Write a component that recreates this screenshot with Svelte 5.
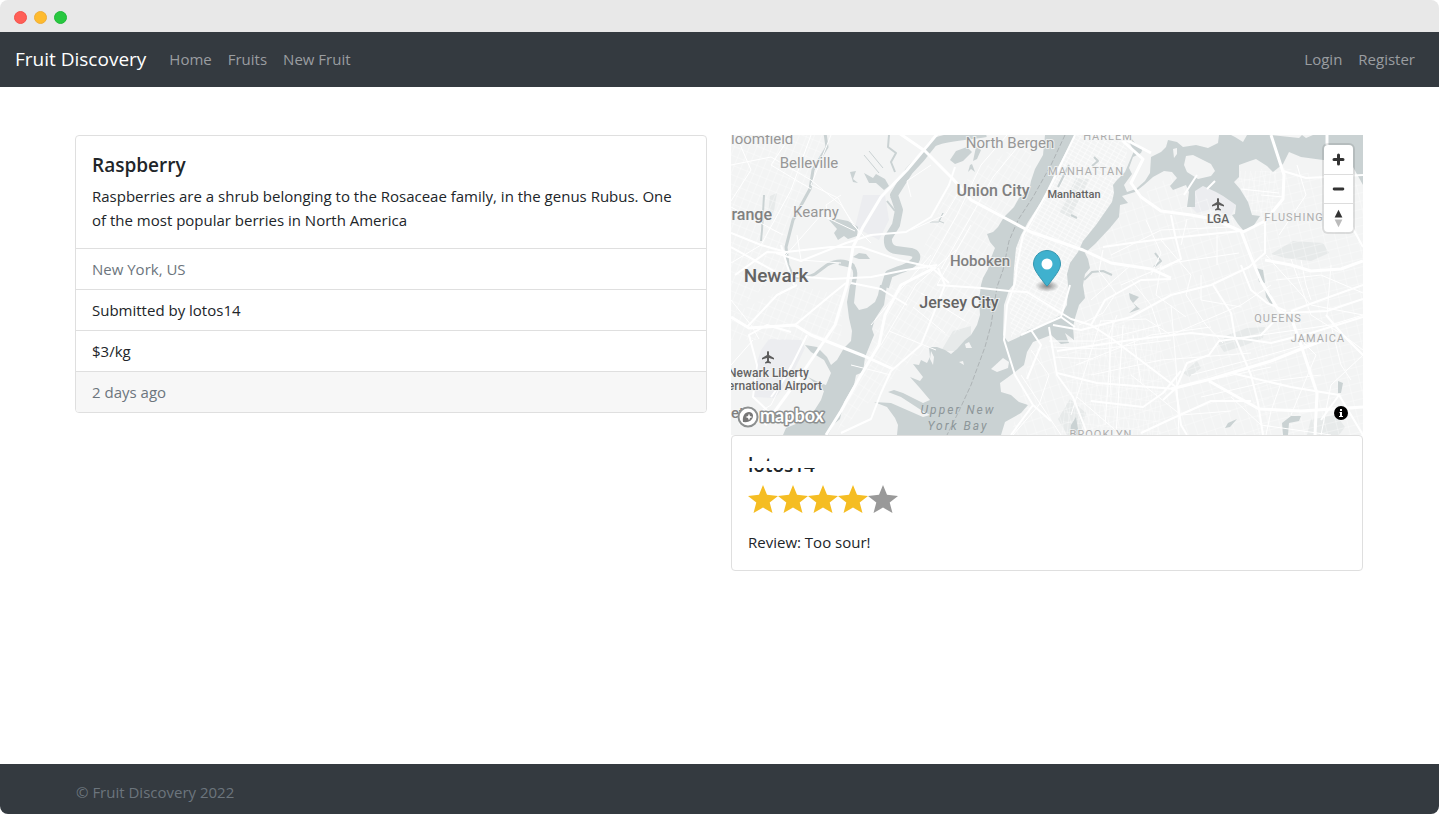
<script>
  const navLinks = ['Home', 'Fruits', 'New Fruit'];
  const userLinks = ['Login', 'Register'];
  const details = [
    { text: 'New York, US', muted: true },
    { text: 'Submitted by lotos14' },
    { text: '$3/kg' }
  ];
  const rating = 4;

  const water = [
    // Hudson
    'M314 0L312 20L304 34L300 46L298 56L288 63L283 72L273 82L267 92L262 97L256 99L259 107L264 113L260 123L257 134L252 143L250 150L248 165L249 180L246 190L240 200L234 205L226 214L220 219L214 215L206 212L198 212L199 222L196 228L190 225L188 230L182 229L192 242L189 246L179 242L188 252L199 265L192 268L172 258L163 255L157 257L170 262L190 275L199 280L192 282L160 268L143 267L156 272L164 283L167 290L166 300L270 300L274 287L283 282L290 278L297 270L288 267L280 260L270 257L269 248L276 243L284 237L293 230L296 217L302 207L320 200L330 209L338 208L334 198L343 205L342 192L344 183L348 170L354 163L352 150L354 139L359 133L357 124L354 118L364 109L379 93L388 82L389 70L397 68L391 61L404 57L413 50L422 42L433 36L441 37L446 43L439 51L442 55L455 50L458 57L456 72L464 72L464 56L472 51L485 57L492 61L505 70L504 79L501 80L507 89L512 95L521 93L529 81L521 80L517 67L509 54L503 47L508 42L508 30L519 26L525 24L536 31L542 37L552 29L558 17L570 22L592 25L606 25L622 32L632 50V0H582L575 3L571 0L568 3L540 0H516L512 7L504 2L500 0H488L487 8L477 13L465 10L452 12L446 7L437 5L435 12L430 17L420 22L419 38L414 46L405 54L396 57L393 50L401 39L398 33L402 22L410 18L412 13L404 8L400 3L397 5L403 16L394 37L386 45L382 50L383 58L381 67L365 90L352 106L347 117L339 128L336 139L337 150L336 170L330 180L312 190L297 195L288 202L277 207L272 200L273 170L278 155L282 150L283 133L285 113L290 100L297 87L310 67L320 47L327 32L336 15L344 0Z',
    // Newark Bay
    'M119 150L116 167L118 183L121 196L120 206L113 213L106 225L100 230L96 222L86 212L74 210L80 217L93 225L100 238L95 250L89 248L77 242L86 250L93 256L90 265L83 276L72 286L55 293L52 300H97L103 289L109 284L113 267L123 250L125 240L132 237L134 222L143 200L141 194L144 184L153 170L156 150H149L147 160L144 167L136 173L128 175L123 168L125 150Z',
    // ponds and creeks
    'M98 85L107 84L117 86L127 92L126 101L117 104L113 101L107 105L103 98L106 94Z',
    'M133 38L142 43L145 39L154 44L158 51L153 55L145 48L138 48Z',
    'M219 25L225 16L236 12L241 17L232 26L224 29Z M241 29L244 37L240 34L237 37L239 30Z',
    'M119 37L125 36L122 44L127 48L122 47Z',
    'M128 118L135 119L139 124L128 124L122 122Z M245 12L250 15L246 24L242 26Z',
    'M534 153L539 158L543 167L540 170L535 162Z M525 133L532 135L534 148L528 147Z M398 158L408 162L402 168L409 174L398 178L405 172L399 164Z',
    'M552 300L551 288L560 281L570 281L568 286L558 288L557 300Z M607 246L612 248L610 258L607 258Z M497 288L506 284L499 292L494 293Z M339 300L340 290L345 282L348 300Z'
  ];
  const islands = [
    'M455 21L462 20L470 24L480 29L484 36L480 41L467 44L456 37L453 30Z',
    'M442 14L446 13L446 19L443 23Z',
    'M260 234L272 223L278 227L277 233L266 237Z',
    'M234 209L238 207L241 213L235 213Z M228 227L232 226L233 230Z M200 216L203 222L202 230L199 224Z'
  ];
  const streams = [
    { d: 'M255 -2C232 2 212 2 202 8L190 23L178 36L171 47L163 60L168 75L165 90L157 103Q156 114 165 115L180 117Q188 119 184 126Q178 132 168 135L158 139L154 152', w: 8 },
    { d: 'M120 152Q127 140 122 130Q110 122 96 130L84 139Q72 145 62 141L57 130L55 112L62 85L79 54L82 35L96 12L94 -2', w: 3 },
    { d: 'M122 150Q127 136 121 131L108 128', w: 4 },
    { d: 'M33 60L31 95L30 106', w: 2 },
    { d: 'M158 0L157 12L165 18L160 27L164 37', w: 2 },
    { d: 'M353 145L361 137L372 136L381 140M424 118L430 126L423 132', w: 2 },
    { d: 'M133 20L148 38M138 16L152 33M199 87L208 87L212 78L208 86L213 88', w: 1 },
    { d: 'M156 66L164 76M160 62L166 70', w: 2 }
  ];
  const parks = [
    'M487 208L497 200L516 193L534 192L532 203L512 211L493 217Z',
    'M39 61L46 58L43 76L36 87L38 70Z',
    'M328 77L345 43L358 44L340 83Z',
    'M540 119L562 106L592 108L598 118L580 126L554 123Z',
    'M327 284L339 264L355 278L349 300H336Z',
    'M452 238L466 226L470 233L458 242Z',
    'M210 216L222 196L240 191L240 200L224 216Z',
    'M576 300L580 284L605 280L614 292L608 300Z'
  ];
  const airports = [
    'M30 215L38 204L70 205L74 213L58 246L44 263L22 262L22 240Z',
    'M460 72L464 55L475 50L505 70L500 81L480 74L466 78Z',
    'M132 60L154 60L158 85L148 105L124 92Z'
  ];
  const grids = [
    { id: 'g1', fill: 'M0 0H96L82 45L55 90L57 132L30 155L0 180Z' },
    { id: 'g2', fill: 'M178 150L214 60L300 0L300 56L262 97L252 145L246 185L180 225L105 300L133 225L160 150Z' },
    { id: 'g3', fill: 'M344 0H398L393 38L382 66L347 116L336 150L332 178L280 202L278 155L283 115L298 87Z' },
    { id: 'g4', fill: 'M355 120L390 75L440 40L500 80L530 90L540 300H280L300 215L343 200Z' },
    { id: 'g5', fill: 'M505 45L540 30L632 50V300H525L530 90Z' },
    { id: 'g6', fill: 'M345 190H430V300H330Z' },
    { id: 'g1', fill: 'M0 180L60 150L112 160L110 205L0 205Z' },
    { id: 'g6', fill: 'M505 36H545V78H520Z' }
  ];
  const minor = [
    'M0 30L40 22L80 45L110 70L130 100M5 0L20 35L0 66M60 0L40 30L80 54M0 72L52 100M80 0L60 55L30 110L0 128',
    'M55 120L90 80L124 96M100 0L80 50L107 63L122 90L140 108M66 100L70 125L110 128',
    'M196 134L226 80L250 30L276 0M210 134L238 85L262 42L290 8M180 95L214 80L226 60M206 150L240 90M200 30L176 46L180 62',
    'M140 190L165 160L200 120M150 210L185 150L225 115M158 196L205 215M182 172L214 198M190 158L234 186M120 230L160 240',
    'M380 120L430 95L500 92M390 150L440 128L508 118M400 145L420 170L430 200M440 200L510 170L540 150M360 165L400 130M372 115L368 136L385 158L372 178L348 190',
    'M430 105L460 140L455 160L475 190L492 208M450 110L456 84M470 140L470 165L510 172M486 130L486 100M415 85L430 118L420 140',
    'M535 120L580 170L632 180M548 100L575 60L566 30M560 124L580 180L612 200L632 215M545 145L590 140L632 158M570 125L575 150L580 165M600 130L596 180M530 60L552 62M510 54L548 58',
    'M345 230L420 200L480 192M360 240L430 225L520 218M400 240L450 280L500 276M440 170L445 230L448 300M380 260L378 200L386 180M410 248L402 200',
    'M460 240L530 222L580 208M455 250L540 232M470 262L540 246L590 240M530 200L600 190L632 180M500 262L530 290L600 300M550 248L540 276L535 300',
    'M560 280L585 220L570 205M590 300L600 250L632 220M600 190L610 230L620 245M440 200L415 184L370 186M430 130L425 160L455 182',
    'M300 215L318 240L308 270L282 300M290 240L330 300M346 262L390 300M0 230L22 205M110 60L95 70L98 84M8 290L40 270L60 230M0 165L20 190L28 204',
    'M318 206L365 206L430 190M320 212L370 214L440 205M322 222L362 224M370 185L340 280M382 185L374 290M392 190L385 300'
  ];
  const highways = [
    { d: 'M207 -2L176 35L150 62L132 92L122 112L116 150L104 190L70 240L34 290', w: 3 },
    { d: 'M165 -4L194 16L222 44L240 65L272 82L300 97L352 115L380 128L420 134L440 143', w: 3 },
    { d: 'M0 98L30 110L55 117L100 112L130 112L168 125L200 132L218 148', w: 2 },
    { d: 'M0 112L50 140L100 144L140 142L175 135L206 130', w: 2 },
    { d: 'M45 118L70 126L115 108L140 100L175 97L200 82L218 50L224 32', w: 2 },
    { d: 'M4 140L36 117L55 118M50 110L56 130L63 150', w: 2 },
    { d: 'M0 182L18 193L64 190L80 200L133 221L162 234', w: 3 },
    { d: 'M16 192L46 160L66 150M64 190L100 160L115 148', w: 2 },
    { d: 'M60 197L36 190L18 200L26 230L22 262L36 275M76 200L56 240L40 262', w: 2 },
    { d: 'M205 132L170 150L154 180L148 210L130 240L110 276L95 300', w: 3 },
    { d: 'M207 133L214 150L198 190L190 210L160 236L150 258L140 284L110 298', w: 2 },
    { d: 'M120 148L150 154L176 170', w: 2 },
    { d: 'M344 0L316 58L292 100L286 130L284 148L276 170L273 205L284 240L302 270L320 286', w: 2 },
    { d: 'M206 150L250 153L278 156L296 157L340 184L360 190L380 203L445 252', w: 2 },
    { d: 'M386 -2L394 8L412 24L400 48L410 62L430 76L460 80L482 84L512 97L534 86L552 64L553 40L540 0', w: 3 },
    { d: 'M390 2L420 18M596 0V10', w: 3 },
    { d: 'M552 36L575 43L632 40', w: 2 },
    { d: 'M510 96L520 122L530 146L548 176L560 182L570 210L586 258L584 300', w: 3 },
    { d: 'M555 176L536 168L520 155L510 130M551 178L530 200L510 203L488 206L478 220L456 228L445 253L432 265', w: 2 },
    { d: 'M534 86L534 118L518 132L480 150L440 160L400 182L350 195L322 190', w: 2 },
    { d: 'M534 125L560 130L580 136L610 134L632 126', w: 3 },
    { d: 'M560 176L590 165L632 150M555 178L596 176L632 164', w: 2 },
    { d: 'M326 216L400 205L460 198L506 203L540 208L580 198L632 182', w: 2 },
    { d: 'M482 150L500 178L504 202L520 240L527 268L532 300', w: 2 },
    { d: 'M440 254L480 244L540 226L590 206M478 246L528 274L570 276L632 272', w: 3 },
    { d: 'M326 238L366 248L445 254L450 290L456 300', w: 2 },
    { d: 'M318 192L326 240L342 262L356 298', w: 2 },
    { d: 'M339 150L330 182L344 192M360 190L374 165L410 145L440 144', w: 2 },
    { d: 'M410 298L440 284L480 266L520 266M450 236L432 258L412 272L360 266', w: 2 },
    { d: 'M500 238L560 252L608 260L632 300M608 260L590 285', w: 2 },
    { d: 'M302 270L280 300M300 195L310 210L296 244M290 200L312 190L330 182', w: 2 },
    { d: 'M440 80L444 100L450 124L430 134M372 112L400 108L440 103L510 96', w: 2 },
    { d: 'M466 40L453 60M484 46L476 54M595 40L620 90L632 112', w: 2 },
    { d: 'M595 180L612 200L632 220', w: 2 }
  ];
  const labels = [
    { t: 'loomfield', x: 0, y: 9, s: 15, k: 'town', a: 'start' },
    { t: 'Belleville', x: 78, y: 33, s: 15, k: 'town' },
    { t: 'Kearny', x: 85, y: 82, s: 15, k: 'town' },
    { t: 'range', x: 41, y: 85, s: 16, k: 'city', a: 'end' },
    { t: 'Newark', x: 45, y: 147, s: 19, k: 'major' },
    { t: 'North Bergen', x: 279, y: 13, s: 15, k: 'town' },
    { t: 'Union City', x: 262, y: 61, s: 16, k: 'city' },
    { t: 'Manhattan', x: 343, y: 63, s: 11, k: 'major' },
    { t: 'MANHATTAN', x: 355, y: 40, s: 11, k: 'area' },
    { t: 'HARLEM', x: 377, y: 5, s: 11, k: 'area' },
    { t: 'Hoboken', x: 249, y: 131, s: 15, k: 'city' },
    { t: 'Jersey City', x: 228, y: 173, s: 16, k: 'major' },
    { t: 'LGA', x: 487, y: 88, s: 12, k: 'major' },
    { t: 'FLUSHING', x: 563, y: 86, s: 11, k: 'area' },
    { t: 'QUEENS', x: 547, y: 187, s: 11, k: 'area' },
    { t: 'JAMAICA', x: 587, y: 207, s: 11, k: 'area' },
    { t: 'BROOKLYN', x: 370, y: 303, s: 11, k: 'area' },
    { t: 'Newark Liberty', x: 78, y: 242, s: 12, k: 'major', a: 'end' },
    { t: 'ernational Airport', x: 91, y: 255, s: 12, k: 'major', a: 'end' },
    { t: 'et', x: 0, y: 283, s: 15, k: 'city', a: 'start' },
    { t: 'Upper New', x: 227, y: 279, s: 12, k: 'bay' },
    { t: 'York Bay', x: 227, y: 295, s: 12, k: 'bay' }
  ];
  const plane = 'M0-6C1-6 1-5 1-4V-2L6 1V2.5L1 1V4L3 5.5V6.5L0 6L-3 6.5V5.5L-1 4V1L-6 2.5V1L-1-2V-4C-1-5-1-6 0-6Z';
</script>

<div class="window">
  <div class="titlebar">
    <span class="dot red"></span><span class="dot amber"></span><span class="dot green"></span>
  </div>

  <nav class="navbar">
    <a class="brand" href="#home">Fruit Discovery</a>
    <div class="links">
      {#each navLinks as link}<a href="#{link}">{link}</a>{/each}
    </div>
    <div class="links user">
      {#each userLinks as link}<a href="#{link}">{link}</a>{/each}
    </div>
  </nav>

  <main>
    <section class="card">
      <div class="card-body">
        <h5>Raspberry</h5>
        <p>Raspberries are a shrub belonging to the Rosaceae family, in the genus Rubus. One of the most popular berries in North America</p>
      </div>
      <ul>
        {#each details as item}<li class:muted={item.muted}>{item.text}</li>{/each}
      </ul>
      <div class="card-footer muted">2 days ago</div>
    </section>

    <section class="column">
      <div class="map">
        <svg class="canvas" viewBox="0 0 632 300" preserveAspectRatio="xMidYMid slice" aria-label="Map of New York">
          <defs>
            <pattern id="g1" width="7" height="9" patternUnits="userSpaceOnUse" patternTransform="rotate(22)"><path d="M0 0H7M0 0V9" /></pattern>
            <pattern id="g2" width="6" height="11" patternUnits="userSpaceOnUse" patternTransform="rotate(32)"><path d="M0 0H6M0 0V11" /></pattern>
            <pattern id="g3" width="6" height="4" patternUnits="userSpaceOnUse" patternTransform="rotate(29)"><path class="strong" d="M0 0H6M0 0V4" /></pattern>
            <pattern id="g4" width="9" height="13" patternUnits="userSpaceOnUse" patternTransform="rotate(-18)"><path d="M0 0H9M0 0V13" /></pattern>
            <pattern id="g5" width="11" height="8" patternUnits="userSpaceOnUse" patternTransform="rotate(-14)"><path d="M0 0H11M0 0V8" /></pattern>
            <pattern id="g6" width="5" height="10" patternUnits="userSpaceOnUse" patternTransform="rotate(6)"><path d="M0 0H5M0 0V10" /></pattern>
            <radialGradient id="shade">
              <stop offset="0" stop-color="#222" stop-opacity=".55" />
              <stop offset="1" stop-color="#222" stop-opacity="0" />
            </radialGradient>
          </defs>
          <rect class="land" width="632" height="300" />
          {#each airports as d}<path class="airport" {d} />{/each}
          {#each parks as d}<path class="park" {d} />{/each}
          {#each grids as g}<path d={g.fill} fill="url(#{g.id})" />{/each}
          {#each streams as s}<path class="stream" d={s.d} stroke-width={s.w} />{/each}
          {#each water as d}<path class="water" {d} />{/each}
          {#each islands as d}<path class="land" {d} />{/each}
          <path class="stream" d="M338 30L327 52M363 22L367 26L361 31M340 80L346 83" stroke-width="2" />
          <path class="border" d="M334 0L320 30L302 62L287 85L278 106L272 135L266 152L260 190L254 212L240 250L228 276L216 300" />
          {#each minor as d}<path class="road thin" {d} />{/each}
          {#each highways as h}<path class="road" d={h.d} stroke-width={h.w} />{/each}
          <path class="plane" d={plane} transform="translate(37 222)" />
          <path class="plane" d={plane} transform="translate(487 69)" />
          {#each labels as l}
            <text class={l.k} x={l.x} y={l.y} font-size={l.s} text-anchor={l.a ?? 'middle'}>{l.t}</text>
          {/each}
          <g transform="translate(302 115)">
            <ellipse cx="14" cy="36" rx="12" ry="6" fill="url(#shade)" />
            <path fill="#3fb1ce" stroke="#3596af" d="M27.5 14C27.5 20 21 27 15.2 35Q14 37 12.8 35C7 27 .5 20 .5 14C.5 6.5 6.5.5 14 .5S27.500 6.500 27.500 14Z" />
            <circle cx="14" cy="14" r="5.500" fill="#fff" />
          </g>
        </svg>

        <div class="controls">
          <button aria-label="Zoom in"><svg viewBox="0 0 29 29"><path d="M14.500 10V19M10 14.500H19" /></svg></button>
          <button aria-label="Zoom out"><svg viewBox="0 0 29 29"><path d="M10 14.500H19" /></svg></button>
          <button aria-label="Reset bearing to north"><svg viewBox="0 0 29 29"><path class="north" d="M10.500 14L14.500 6L18.500 14Z" /><path class="south" d="M10.500 16L14.500 24L18.500 16Z" /></svg></button>
        </div>

        <a class="logo" href="#mapbox" aria-label="Mapbox">
          <svg viewBox="0 0 92 24">
            <circle cx="13" cy="12" r="9.500" fill="#fff" stroke="#8d9090" stroke-width="2" />
            <path fill="#777" d="M8 17C7 11 10 7 14 7C18 7 19 11 17 14C15 17 11 17.500 8 17Z" />
            <path fill="#fff" d="M14 8.500L15 11L17.500 12L15 13L14 15.500L13 13L10.500 12L13 11Z" />
            <text x="25" y="17">mapbox</text>
          </svg>
        </a>

        <button class="info" aria-label="Toggle attribution">
          <svg viewBox="0 0 14 14"><circle cx="7" cy="7" r="7" /><path d="M5.500 6H8V10H9V11H5V10H6V7H5.500ZM6 3H8V5H6Z" fill="#fff" /></svg>
        </button>
      </div>

      <article class="card">
        <div class="card-body">
          <h5 class="reviewer">lotos14</h5>
          <div class="stars" role="img" aria-label="{rating} out of 5 stars">
            {#each Array(5) as _, i}
              <svg class:on={i < rating} viewBox="0 0 30 30"><path d="M15 1L19 10.800L30 12L21.700 18.600L24.500 29L15 23.600L5.500 29L8.300 18.600L0 12L11 10.800Z" /></svg>
            {/each}
          </div>
          <p>Review: Too sour!</p>
        </div>
      </article>
    </section>
  </main>

  <footer>© Fruit Discovery 2022</footer>
</div>

<style>
  :global(body) {
    background: #fff;
  }
  .window {
    box-sizing: border-box;
    display: flex;
    flex-direction: column;
    min-height: 100vh;
    overflow: hidden;
    border-radius: 8px;
    background: #fff;
    color: #212529;
    font: 15px/24px 'Open Sans', 'Noto Sans', sans-serif;
  }
  .titlebar {
    display: flex;
    align-items: center;
    gap: 7px;
    height: 32px;
    padding: 2px 14px 0;
    box-sizing: border-box;
    background: #e8e8e8;
  }
  .dot {
    width: 11px;
    height: 11px;
    border: 1px solid;
    border-radius: 50%;
  }
  .red { background: #ff5f57; border-color: #f4524c; }
  .amber { background: #febb2e; border-color: #eeae3a; }
  .green { background: #28c840; border-color: #20b83a; }

  .navbar {
    box-sizing: border-box;
    display: flex;
    align-items: center;
    padding: 0 16px 2px 15px;
    height: 55px;
    background: #343a40;
  }
  .navbar a {
    text-decoration: none;
    color: #9a9da0;
  }
  .navbar .brand {
    margin-right: 15px;
    color: #fff;
    font-size: 19px;
  }
  .links {
    display: flex;
  }
  .links a {
    padding: 8px;
  }
  .user {
    margin-left: auto;
  }

  main {
    display: grid;
    grid-template-columns: 1fr 1fr;
    align-items: start;
    gap: 24px;
    padding: 48px 76px 48px 75px;
  }
  .card {
    border: 1px solid #dfdfdf;
    border-radius: 4px;
    overflow: hidden;
  }
  .card-body {
    padding: 16px;
  }
  h5 {
    margin: 0 0 6px;
    font-size: 19px;
    font-weight: 600;
    line-height: 26px;
  }
  p {
    margin: 0;
    padding-right: 8px;
  }
  ul {
    margin: 0;
    padding: 0;
    list-style: none;
  }
  li,
  .card-footer {
    padding: 8px 16px;
    border-top: 1px solid #dfdfdf;
  }
  .card-footer {
    background: #f7f7f7;
  }
  .muted {
    color: #6c757d;
  }

  .map {
    position: relative;
    height: 300px;
    overflow: hidden;
  }
  .canvas {
    display: block;
    width: 100%;
    height: 100%;
    font-family: Roboto, 'Open Sans', sans-serif;
  }
  .land { fill: #f3f4f4; }
  .airport { fill: #ecedf0; }
  .park { fill: #e7eaea; }
  .water { fill: #cad2d3; }
  .stream {
    fill: none;
    stroke: #cad2d3;
    stroke-linejoin: round;
  }
  .border {
    fill: none;
    stroke: #aeb4b6;
    stroke-dasharray: 5 2;
  }
  pattern path {
    fill: none;
    stroke: #fff;
    stroke-opacity: 0.6;
  }
  pattern .strong {
    stroke-opacity: 1;
  }
  .road {
    fill: none;
    stroke: #fff;
    stroke-linejoin: round;
  }
  .thin {
    stroke-width: 1;
  }
  .plane { fill: #5c5c5c; }
  .canvas text {
    paint-order: stroke;
    stroke: #f5f6f6;
    stroke-opacity: 0.8;
    stroke-width: 2px;
  }
  .canvas .town { fill: #979797; }
  .canvas .city { fill: #808080; font-weight: 500; }
  .canvas .major { fill: #646464; font-weight: 500; }
  .canvas .area { fill: #adadad; letter-spacing: 1px; }
  .canvas .bay {
    fill: #8d9699;
    stroke: none;
    font-style: italic;
    letter-spacing: 2px;
  }

  .controls {
    position: absolute;
    top: 10px;
    right: 10px;
    width: 29px;
    border-radius: 4px;
    background: #fff;
    box-shadow: 0 0 0 2px rgba(0, 0, 0, 0.1);
  }
  button {
    display: block;
    padding: 0;
    border: 0;
    background: none;
  }
  .controls button + button {
    border-top: 1px solid #ddd;
  }
  .controls svg {
    display: block;
    width: 29px;
    height: 29px;
    fill: none;
    stroke: #333;
    stroke-width: 3;
    stroke-linecap: round;
  }
  .controls button + button svg {
    height: 28px;
  }
  .controls .north { fill: #333; stroke: none; }
  .controls .south { fill: #bbb; stroke: none; }

  .logo {
    position: absolute;
    left: 4px;
    bottom: 6px;
  }
  .logo svg {
    display: block;
    width: 92px;
    height: 24px;
  }
  .logo text {
    fill: #fff;
    stroke: #8d9090;
    stroke-width: 3px;
    stroke-linejoin: round;
    paint-order: stroke;
    font: 700 18px Lato, sans-serif;
  }
  .info {
    position: absolute;
    right: 15px;
    bottom: 15px;
  }
  .info svg {
    display: block;
    width: 14px;
    height: 14px;
  }

  .reviewer {
    position: relative;
  }
  .reviewer::after {
    content: '';
    position: absolute;
    inset: 0;
    background:
      linear-gradient(#fff, #fff) 0 9px / 100% 7px no-repeat,
      linear-gradient(#fff, #fff) 28px 0 / 100% 16px no-repeat;
  }
  .stars {
    display: flex;
    margin-bottom: 16px;
  }
  .stars svg {
    width: 30px;
    height: 30px;
    fill: #999;
  }
  .stars .on {
    fill: #f5bd23;
  }

  footer {
    box-sizing: border-box;
    height: 50px;
    margin-top: auto;
    padding: 16px 76px;
    background: #343a40;
    color: #6c757d;
  }
</style>
